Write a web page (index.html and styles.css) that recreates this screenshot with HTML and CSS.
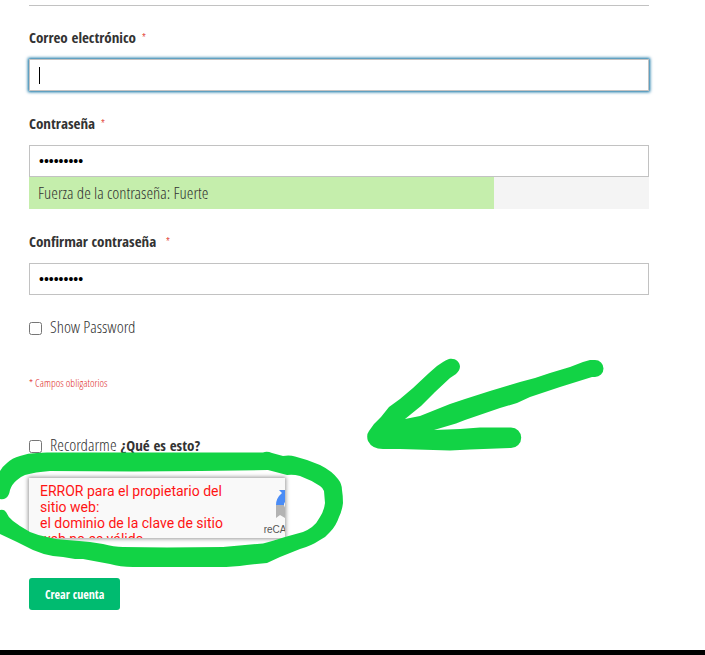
FILE: index.html
```html
<!DOCTYPE html>
<html lang="es">
<head>
    <meta charset="UTF-8">
    <meta name="viewport" content="width=device-width, initial-scale=1.0">
    <title>Crear cuenta</title>
    <link rel="stylesheet" href="styles.css">
</head>
<body>

<form class="account-form">
    <div class="field">
        <label class="label" for="email">Correo electrónico <span class="star">*</span></label>
        <input type="email" id="email" class="input-text focused">
    </div>

    <div class="field">
        <label class="label" for="password">Contraseña <span class="star">*</span></label>
        <input type="password" id="password" class="input-text" value="abcdefghi">
        <div class="strength">
            <div class="strength-level">Fuerza de la contraseña: Fuerte</div>
        </div>
    </div>

    <div class="field">
        <label class="label" for="confirm">Confirmar contraseña&nbsp; <span class="star">*</span></label>
        <input type="password" id="confirm" class="input-text" value="abcdefghi">
    </div>

    <div class="choice">
        <input type="checkbox" id="show-password">
        <label for="show-password">Show Password</label>
    </div>

    <p class="required-note">* Campos obligatorios</p>

    <div class="choice">
        <input type="checkbox" id="remember">
        <label for="remember">Recordarme</label>
        <a class="what-link" href="#">¿Qué es esto?</a>
    </div>

    <div class="captcha">
        <div class="captcha-error">ERROR para el propietario del sitio web:<br>el dominio de la clave de sitio web no es válido</div>
        <div class="captcha-brand">
            <svg class="captcha-logo" viewBox="0 0 32 32" aria-hidden="true">
                <path fill="#1c3aa9" d="M32 16V2l-4 4A16 16 0 0 0 16 0v8c3 0 5 1 7 3l-5 5z"/>
                <path fill="#4a8cf6" d="M16 0H3l3 3Q0 8 0 15h8q0-2 1-3l7 4z"/>
                <path fill="#b3b3b3" d="M0 15v13l4-3 5 3q6 3 12 0l7-4-6-6c-2 3-4 4-6 4-4 0-7-3-8-7z"/>
            </svg>
            <span>reCAPTCHA</span>
        </div>
    </div>

    <button type="submit" class="submit-button">Crear cuenta</button>
</form>

<footer class="footer"></footer>

<svg class="marker" width="705" height="655" aria-hidden="true">
    <path d="M0 471Q3 466 7 463Q12 458 20 456Q28 453 37 453L47 452.500L263 452.500Q267 451 272 453L283 456Q290 455 295 456.500L307 460L320 465Q332 471 338 479Q342 484 342 490Q343 496 343 503Q342 511 339 517Q336 526 330 532Q326 537 320 540Q311 546 300 549L280 557L267 563L247 565Q232 567 220 567L133 567Q120 567 110 564L83 559H75L63 557L53 556Q42 554 33 550L17 542L0 534V510Q4 509 6 512Q8 517 13 521L20 526L30 532Q37 535 47 537Q57 540 67 540Q80 541 90 542L103 544Q114 547 123 547L167 547.500L223 547L263 543.500Q272 541 285 537L303 532Q308 530 312 527Q317 523 320 517Q324 511 325 503L324 491Q323 488 320 486Q311 480 300 476Q293 474 287 475L268 470L200 471L133 471.500L50 471Q35 472 25 475Q20 477 17 480Q12 484 10 490Q9 496 6 498Q3 500 0 499Z"/>
    <path d="M443 362L437 366L429 373L413 388L400 399L389 407L381 417L374 424L369 431Q366 435 368 441Q372 449 383 449H400L450 450.500L470 449.500L511 448A10 10 0 0 0 511 427.500H480L460 429L434 430L456 423.500L465 420L500 408L517 403L530 397L560 387L592 377H595A8 8 0 0 0 595 360H590L583 362L570 367L550 373L535 378L520 382L510 385L490 391L465 399L450 404L430 412L420 416L405 419L421 406L435 392L450 378L456 374C465 366 457 357 449 359Q446 360 443 362Z"/>
</svg>

</body>
</html>
```

FILE: styles.css
```css
* {
    box-sizing: border-box;
}
body {
    position: relative;
    margin: 0;
    min-height: 100vh;
    display: flex;
    flex-direction: column;
    background: #fff;
    color: #333;
    font-family: "Open Sans Condensed Light", "Roboto Condensed", sans-serif;
    font-size: 17px;
    line-height: 20px;
    overflow-x: hidden;
}
.account-form {
    margin: 5px 56px 40px 29px;
    padding-top: 21px;
    border-top: 1px solid #c2c2c2;
}
.field {
    margin-bottom: 22px;
}
.label {
    display: block;
    height: 20px;
    margin-bottom: 12px;
    font-family: "Open Sans Condensed", "Roboto Condensed", sans-serif;
    font-size: 15px;
    font-weight: bold;
}
.star {
    margin-left: 2px;
    color: #e02b27;
    font-family: "Open Sans Condensed Light", sans-serif;
    font-size: 12px;
    font-weight: normal;
    line-height: 1;
}
.input-text {
    display: block;
    width: 100%;
    height: 32px;
    padding: 0 9px;
    border: 1px solid #c2c2c2;
    background: #fff;
    color: #000;
    font-family: "Liberation Sans", sans-serif;
    font-size: 14px;
    outline: none;
}
/* focus ring and text cursor */
.focused {
    box-shadow: 0 0 3px 1px #00699d;
    background: linear-gradient(#000, #000) no-repeat 9px center / 1px 17px;
}
.strength {
    background: #f4f4f4;
}
.strength-level {
    width: 75%;
    padding: 6px 9px;
    background: #c5eeac;
}
.choice {
    display: flex;
    align-items: center;
    gap: 4px;
    height: 20px;
}
.choice input {
    width: 13px;
    height: 13px;
    margin: 2px 4px 0 0;
}
.required-note {
    margin: 36px 0 42px;
    color: #e02b27;
    font-size: 11px;
}
.what-link {
    color: #333;
    font-family: "Open Sans Condensed", "Roboto Condensed", sans-serif;
    font-size: 15px;
    font-weight: bold;
    text-decoration: none;
}
.captcha {
    display: flex;
    width: 256px;
    height: 60px;
    margin: 23px 0 40px;
    overflow: hidden;
    background: #f9f9f9;
    box-shadow: 0 0 4px 1px rgba(0, 0, 0, 0.4);
    font-family: Roboto, sans-serif;
}
.captcha-error {
    flex: none;
    width: 206px;
    padding: 5px 0 0 11px;
    color: #ff1414;
    font-size: 14px;
    line-height: 16px;
}
.captcha-brand {
    flex: none;
    display: flex;
    flex-direction: column;
    align-items: center;
    width: 114px;
    padding-top: 12px;
    color: #555;
    font-family: "Liberation Sans", sans-serif;
    font-size: 10px;
    line-height: 16px;
}
.captcha-logo {
    flex: none;
    width: 32px;
    height: 32px;
}
.submit-button {
    display: block;
    height: 32px;
    padding: 0 16px;
    border: none;
    border-radius: 3px;
    background: #00bb70;
    color: #fff;
    font-family: "Open Sans Condensed", "Roboto Condensed", sans-serif;
    font-size: 12px;
    font-weight: bold;
    cursor: pointer;
}
.footer {
    flex: 1;
    min-height: 5px;
    background: #000;
}
.marker {
    position: absolute;
    top: 0;
    left: 0;
    fill: #12d345;
    pointer-events: none;
}
```
